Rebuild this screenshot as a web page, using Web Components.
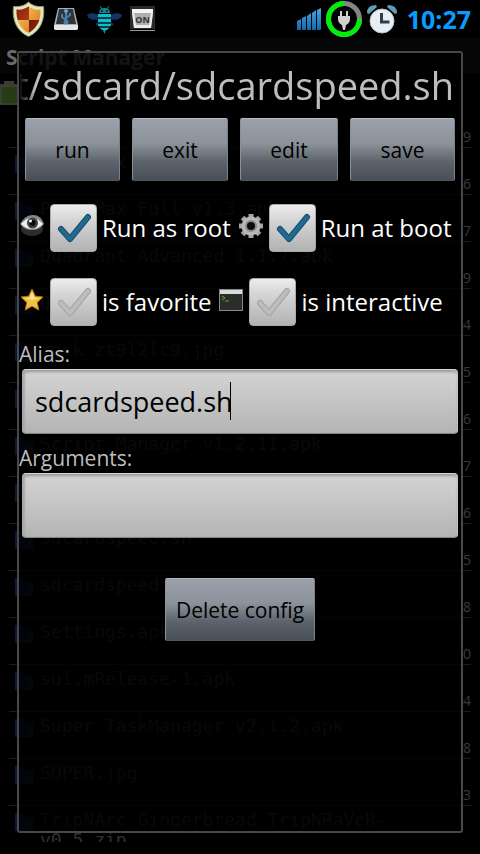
<!DOCTYPE html>
<html lang="en">
<head>
<meta charset="UTF-8">
<meta name="viewport" content="width=device-width, initial-scale=1">
<title>Script Manager</title>
<style>
  html, body {
    margin: 0;
    height: 100%;
    background: #000;
  }

  body {
    display: flex;
    flex-direction: column;
    font-family: "Open Sans", "Noto Sans", sans-serif;
    color: #fff;
  }

  main {
    flex: 1;
    min-height: 0;
    display: grid;
    grid-template: minmax(0, 1fr) / minmax(0, 1fr);
  }

  /* the dialog sits on top of the list, in the same cell */
  main > * {
    grid-area: 1 / 1;
  }

  .options {
    display: flex;
    flex-direction: column;
    gap: 26px;
    margin-bottom: 15px;
  }

  .row {
    display: flex;
    gap: 8px;
    padding-left: 1px;
  }
</style>
</head>
<body>
  <status-bar time="10:27"></status-bar>
  <main>
    <file-list heading="Script Manager"></file-list>
    <config-dialog heading="t/sdcard/sdcardspeed.sh">
      <action-button slot="actions">run</action-button>
      <action-button slot="actions">exit</action-button>
      <action-button slot="actions">edit</action-button>
      <action-button slot="actions">save</action-button>
      <div class="options">
        <div class="row">
          <check-option icon="eye" label="Run as root" checked></check-option>
          <check-option icon="gear" label="Run at boot" checked></check-option>
        </div>
        <div class="row">
          <check-option icon="star" label="is favorite"></check-option>
          <check-option icon="terminal" label="is interactive"></check-option>
        </div>
      </div>
      <text-field label="Alias:" value="sdcardspeed.sh" active></text-field>
      <text-field label="Arguments:" value=""></text-field>
      <action-button slot="footer">Delete config</action-button>
    </config-dialog>
  </main>

<script>
class StatusBar extends HTMLElement {
  connectedCallback() {
    this.attachShadow({ mode: 'open' });
    this.shadowRoot.innerHTML = `
      <style>
        :host {
          display: flex;
          justify-content: space-between;
          align-items: center;
          height: 38px;
          padding: 0 9px 0 12px;
          background: #000;
        }

        div {
          display: flex;
          align-items: center;
          gap: 8px;
        }

        .right {
          gap: 5px;
        }

        svg {
          display: block;
        }

        time {
          margin-left: 5px;
          font: bold 25px/32px "Open Sans", "Noto Sans", sans-serif;
          color: #0a9bff;
        }
      </style>

      <div>
        <svg width="33" height="36" viewBox="0 0 33 36">
          <defs>
            <linearGradient id="red" x2="1" y2="1"><stop stop-color="#6e1408"/><stop offset="1" stop-color="#b03c14"/></linearGradient>
            <linearGradient id="gold" x2="1" y2="1"><stop stop-color="#f8c050"/><stop offset="1" stop-color="#dc7a20"/></linearGradient>
            <clipPath id="shield"><path d="M16.500 5.500C13 8 9 9 4.500 8.500 4 18 7 27 16.500 32 26 27 29 18 28.500 8.500 24 9 20 8 16.500 5.500Z"/></clipPath>
          </defs>
          <path d="M16.500 1C13 4.500 8 6 1.500 5.500 0 18 4 30 16.500 35.500 29 30 33 18 31.500 5.500 25 6 20 4.500 16.500 1Z" fill="#e4e6bc" stroke="#8d9270" stroke-width="1"/>
          <g clip-path="url(#shield)">
            <path d="M0 0h17v19H0z" fill="url(#red)"/>
            <path d="M17 0h16v19H17z" fill="url(#gold)"/>
            <path d="M0 19h17v17H0z" fill="url(#gold)"/>
            <path d="M17 19h16v17H17z" fill="url(#red)"/>
          </g>
        </svg>
        <svg width="26" height="26" viewBox="0 0 26 26">
          <path d="M5 2h16l4 17v3q0 2-2 2H3q-2 0-2-2v-3z" fill="#a9adb5"/>
          <path d="M6 3h14l3 15H3z" fill="#30343b"/>
          <path d="M1 19h24v3q0 2-2 2H3q-2 0-2-2z" fill="#e4e6ea"/>
          <g fill="none" stroke="#4a7fa8" stroke-width="2"><path d="M13 5v13M13 14l-4-3V8M13 12l4-3V7"/></g>
          <circle cx="13" cy="16" r="2.500" fill="#4a7fa8"/><circle cx="13" cy="5" r="2" fill="#6ba3cc"/>
        </svg>
        <svg width="35" height="30" viewBox="0 0 35 30">
          <path d="M13 12C9 9 4 8 0 11c1 4 6 6 13 4zM22 12c4-3 9-4 13-1-1 4-6 6-13 4z" fill="#123368"/>
          <path d="M13 17l-4 4M22 17l4 4" stroke="#123368" stroke-width="2"/>
          <path d="M13 2l2 3M22 2l-2 3" stroke="#138a94" stroke-width="1"/>
          <path d="M12 9q0-5 5.500-5T23 9z" fill="#13848e"/>
          <path d="M11 10h13v3H11zM11 15h13v3H11zM11 20h13v2H11zM13 24h9l-2 2h-5z" fill="#14bcc6"/>
          <path d="M11 13h13v2H11zM11 18h13v2H11zM12 22h11v2H12z" fill="#063e50"/>
          <path d="M16 26h3l-1.500 4z" fill="#118b98"/>
          <circle cx="15" cy="7" r="1" fill="#022"/><circle cx="20" cy="7" r="1" fill="#022"/>
        </svg>
        <svg width="26" height="26" viewBox="0 0 26 26">
          <path d="M0 0h25v23H0z" fill="#2a2a2a"/>
          <path d="M2 3h21v4l-2 15H4L2 7z" fill="#aeaeae"/>
          <path d="M2 3h21v4H2z" fill="#f4f4f4"/>
          <path d="M2 6h2l2 13h13l2-13h2l-2 16H4z" fill="#ececec"/>
          <path d="M0 24.500h25" stroke="#999"/>
          <text x="12.500" y="17" text-anchor="middle" font-family="Open Sans" font-weight="bold" font-size="9" fill="#333">ON</text>
        </svg>
      </div>

      <div class="right">
        <svg width="24" height="22" viewBox="0 0 24 22">
          <defs><linearGradient id="sig" gradientUnits="userSpaceOnUse" x1="0" y1="0" x2="0" y2="22"><stop stop-color="#46a8ea"/><stop offset="1" stop-color="#1566a4"/></linearGradient></defs>
          <path d="M0 13l4-2v11H0zM5 10l4-2v14H5zM10 8l4-3v17h-4zM15 5l4-3v20h-4zM20 2l4-2v22h-4z" fill="url(#sig)"/>
        </svg>
        <svg width="36" height="36" viewBox="0 0 36 36">
          <circle cx="18" cy="18" r="15.500" fill="none" stroke="#858585" stroke-width="5"/>
          <path d="M33.500 18A15.500 15.500 0 1 1 18 2.500" fill="none" stroke="#00ee08" stroke-width="5"/>
          <path d="M14 10h2v5h4v-5h2v5h2v3q0 4-4 6l-1 5h-2l-1-5q-4-2-4-6v-3h2z" fill="#d0d0d0"/>
        </svg>
        <svg width="30" height="30" viewBox="0 0 30 30">
          <path d="M0 9Q0 1 9 1L10 3 2 10zM30 9Q30 1 21 1L20 3l8 7z" fill="#5e9bb9"/>
          <circle cx="15" cy="17" r="12" fill="#e6eff5" stroke="#b4c4ce"/>
          <path d="M14.500 9v9h8" fill="none" stroke="#333c43" stroke-width="3"/>
        </svg>
        <time>${this.getAttribute('time')}</time>
      </div>
    `;
  }
}

// name shown on the left, last digit of the size column on the right
const FILES = [
  ['', '9'],
  ['       x         .', '6'],
  ['PhotoMax Full v1.3.apk', '7'],
  ['Quadrant Advanced 1.1.7.apk', '9'],
  ['Q       P      a', '4'],
  ['rock_zt9l2lc9.jpg', '5'],
  ['', '6'],
  ['Script Manager v1.2.11.apk', '7'],
  ['', '6'],
  ['sdcardspeed.sh', '5'],
  ['sdcardspeed', '8'],
  ['Settings.apk', '0'],
  ['sui.mRelease-1.apk', '4'],
  ['Super TaskManager v2.1.2.apk', '8'],
  ['SUPER.jpg', '3'],
  ['TripNArc_Gingerbread_TripNRaVeR-\nv0.5.zip', '']
];

class FileList extends HTMLElement {
  connectedCallback() {
    const rows = FILES.map(([name, size]) => `
      <li>
        <svg width="20" height="20" viewBox="0 0 20 20"><path d="M1 1h7l2 4h9v14H1z" fill="#0a1838"/><path d="M19 5v14H9z" fill="#182230"/></svg>
        <span class="name">${name}</span>
        <span class="size">${size}</span>
      </li>`).join('');

    this.attachShadow({ mode: 'open' });
    this.shadowRoot.innerHTML = `
      <style>
        :host {
          display: block;
          overflow: hidden;
          margin-bottom: 12px;
          color: #303030;
        }

        h1 {
          margin: 0;
          padding: 3px 6px 0;
          background: #060606;
          font: bold 21px/32px "Open Sans", "Noto Sans", sans-serif;
          color: #6a6a6a;
        }

        .storage {
          height: 27px;
          padding-top: 8px;
        }

        svg {
          display: block;
          flex: none;
        }

        ul {
          margin: 0;
          padding: 0 9px;
          list-style: none;
        }

        li {
          display: flex;
          align-items: flex-start;
          gap: 6px;
          box-sizing: border-box;
          height: 47px;
          padding: 4px 0 0 5px;
          border-bottom: 1px solid #1c1c1c;
        }

        li:first-child {
          height: 40px;
          padding-top: 0;
        }

        li:first-child svg {
          visibility: hidden;
        }

        li:last-child {
          border-bottom: 0;
        }

        li svg {
          margin-top: 2px;
        }

        .name {
          flex: 1;
          white-space: pre;
          font: 18px/20px "DejaVu Sans Mono", "Liberation Mono", monospace;
        }

        .size {
          align-self: flex-end;
          font-size: 14px;
          line-height: 20px;
          color: #3a3a3a;
        }
      </style>

      <h1>${this.getAttribute('heading')}</h1>
      <div class="storage">
        <svg width="19" height="24" viewBox="0 0 19 24"><path d="M4 0h10v3h5v21H0V3h4z" fill="#3a3d36"/><path d="M2 6h17v16H2z" fill="#253c14"/></svg>
      </div>
      <ul>${rows}</ul>
    `;
  }
}

class ConfigDialog extends HTMLElement {
  connectedCallback() {
    this.attachShadow({ mode: 'open' });
    this.shadowRoot.innerHTML = `
      <style>
        :host {
          display: flex;
          flex-direction: column;
          margin: 13px 17px 21px;
          border: 2px solid #484848;
          border-radius: 3px;
          background: rgba(0, 0, 0, 0.82);
        }

        h2 {
          display: flex;
          justify-content: flex-end;
          overflow: hidden;
          margin: 0 7px 1px 0;
          font-size: 38px;
          font-weight: normal;
          line-height: 64px;
          white-space: nowrap;
          color: #bdbdbd;
          -webkit-mask-image: linear-gradient(90deg, transparent, #000 16px);
          mask-image: linear-gradient(90deg, transparent, #000 16px);
        }

        .actions {
          display: grid;
          grid-template-columns: 95fr 96fr 98fr 105fr;
          gap: 12px;
          margin: 0 6px 23px;
        }

        .footer {
          display: flex;
          justify-content: center;
          margin-top: 29px;
        }
      </style>

      <h2>${this.getAttribute('heading')}</h2>
      <div class="actions"><slot name="actions"></slot></div>
      <slot></slot>
      <div class="footer"><slot name="footer"></slot></div>
    `;
  }
}

class ActionButton extends HTMLElement {
  connectedCallback() {
    this.attachShadow({ mode: 'open' });
    this.shadowRoot.innerHTML = `
      <style>
        :host {
          display: block;
        }

        button {
          width: 100%;
          height: 63px;
          padding: 0 10px;
          border: 1px solid;
          border-color: #b3b7bf #7b8189 #50565d #8b9199;
          border-radius: 2px;
          background: linear-gradient(#9ba1ab, #8c9299 40%, #5c636c 70%, #484f58);
          font-family: inherit;
          font-size: 21px;
          color: #000;
        }
      </style>

      <button type="button"><slot></slot></button>
    `;
  }
}

const OPTION_ICONS = {
  eye: `
    <ellipse cx="12" cy="15" rx="11" ry="7" fill="#2c2c2c"/>
    <path d="M0 10Q5 1 13 1t11 9q-4 6-12 6T0 10z" fill="#888"/>
    <path d="M1 10q5-6 11-6t11 6q-5 5-11 5T1 10z" fill="#eee"/>
    <circle cx="12.500" cy="9" r="5.500" fill="#38424c"/>
    <circle cx="12.500" cy="9" r="3" fill="#050505"/>
    <circle cx="10.500" cy="7" r="1.500" fill="#fff"/>`,
  gear: `
    <path d="M12 0v24M0 12h24M3.500 3.500l17 17M20.500 3.500l-17 17" stroke="#a6a6a6" stroke-width="5"/>
    <circle cx="12" cy="12" r="9.500" fill="#b8b8b8"/>
    <circle cx="12" cy="12" r="6" fill="#8a8a8a"/>
    <circle cx="12" cy="12" r="4" fill="#0c0c0c"/>`,
  star: `
    <path d="M12 1l3.300 7.200 7.700.8-5.800 5.400L18.800 22 12 18.200 5.200 22l1.600-7.600L1 9l7.700-.8z" fill="#f0c440" stroke="#b36f18" stroke-width="1" stroke-linejoin="round"/>
    <path d="M12 4l2.300 5.500L19 10l-7 2-7-2 4.700-.5z" fill="#fae38a"/>`,
  terminal: `
    <path d="M0 1h24v22H0z" fill="#888"/>
    <path d="M1 2h22v4H1z" fill="#dadada"/>
    <path d="M1 6h22v16H1z" fill="#2b2d2b"/>
    <path d="M3 8l3 2-3 2M6 13h4" fill="none" stroke="#6da048"/>`
};

class CheckOption extends HTMLElement {
  connectedCallback() {
    const icon = this.getAttribute('icon');
    this.attachShadow({ mode: 'open' });
    this.shadowRoot.innerHTML = `
      <style>
        :host {
          display: flex;
          align-items: center;
          gap: 5px;
        }

        .icon {
          flex: none;
          margin: 0 1px 4px 0;
        }

        .box {
          display: grid;
          width: 47px;
          height: 48px;
        }

        .box > * {
          grid-area: 1 / 1;
        }

        input {
          appearance: none;
          width: 100%;
          height: 100%;
          margin: 0;
          box-sizing: border-box;
          border: 1px solid #aaa;
          border-radius: 4px;
          background: linear-gradient(#ececec, #d4d4d4 35%, #b2b2b2);
        }

        .tick {
          pointer-events: none;
          fill: none;
          stroke-linecap: round;
          stroke-linejoin: round;
        }

        .edge {
          stroke: #a4a4a4;
          stroke-width: 6;
        }

        .mark {
          stroke: #bdbdbd;
          stroke-width: 4;
        }

        input:checked + .tick .edge {
          stroke: #164f6e;
        }

        input:checked + .tick .mark {
          stroke: #216990;
        }

        label {
          font-size: 24px;
          line-height: 32px;
          white-space: nowrap;
        }
      </style>

      <svg class="icon" width="24" height="24" viewBox="0 0 24 24">${OPTION_ICONS[icon]}</svg>
      <span class="box">
        <input type="checkbox" id="box" ${this.hasAttribute('checked') ? 'checked' : ''}>
        <svg class="tick" width="47" height="48" viewBox="0 0 47 48">
          <path class="edge" d="M11 25l9 10L38 13"/>
          <path class="mark" d="M11 25l9 10L38 13"/>
        </svg>
      </span>
      <label for="box">${this.getAttribute('label')}</label>
    `;
  }
}

class TextField extends HTMLElement {
  connectedCallback() {
    this.attachShadow({ mode: 'open' });
    this.shadowRoot.innerHTML = `
      <style>
        :host {
          display: block;
        }

        label {
          display: block;
          font-size: 21px;
          line-height: 26px;
          padding-bottom: 2px;
          color: #bdbdbd;
        }

        .field {
          position: relative;
          margin: 0 3px 11px;
        }

        input {
          display: block;
          box-sizing: border-box;
          width: 100%;
          height: 65px;
          padding: 0 12px;
          border: 1px solid;
          border-color: #d8d8de #c4c4c8 #858585 #aaa;
          border-radius: 4px;
          outline: 0;
          background: linear-gradient(#d4d4d4, #b4b4b4);
          box-shadow: inset 0 3px 3px -1px #999, inset 2px 0 2px #aaa;
          font-family: inherit;
          font-size: 27px;
          color: #000;
        }

        /* text cursor after the last character */
        .cursor {
          position: absolute;
          top: 13px;
          left: 208px;
          width: 1px;
          height: 38px;
          background: #000;
        }
      </style>

      <label for="text">${this.getAttribute('label')}</label>
      <div class="field">
        <input type="text" id="text" value="${this.getAttribute('value')}">
        ${this.hasAttribute('active') ? '<span class="cursor"></span>' : ''}
      </div>
    `;
  }
}

customElements.define('status-bar', StatusBar);
customElements.define('file-list', FileList);
customElements.define('config-dialog', ConfigDialog);
customElements.define('action-button', ActionButton);
customElements.define('check-option', CheckOption);
customElements.define('text-field', TextField);
</script>
</body>
</html>
